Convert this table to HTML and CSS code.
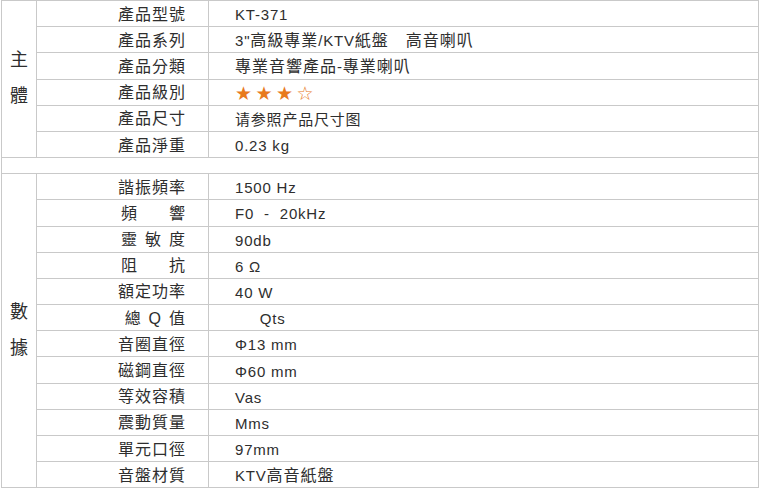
FILE: index.html
```html
<!DOCTYPE html>
<html lang="zh-Hant">
<head>
<meta charset="utf-8">
<title>KT-371</title>
<link rel="stylesheet" href="styles.css">
</head>
<body>
<table class="spec">
  <colgroup>
    <col class="c-group">
    <col class="c-label">
    <col class="c-value">
  </colgroup>
  <tbody>
    <tr>
      <td class="group" rowspan="6">主<br>體</td>
      <td class="label">產品型號</td>
      <td class="value">KT-371</td>
    </tr>
    <tr>
      <td class="label">產品系列</td>
      <td class="value">3"<span class="han">高級專業</span>/KTV<span class="han">紙盤　高音喇叭</span></td>
    </tr>
    <tr>
      <td class="label">產品分類</td>
      <td class="value"><span class="han">專業音響產品</span>-<span class="han">專業喇叭</span></td>
    </tr>
    <tr>
      <td class="label">產品級別</td>
      <td class="value"><span class="stars"><span class="star">★</span><span class="star">★</span><span class="star">★</span><span class="star">☆</span></span></td>
    </tr>
    <tr>
      <td class="label">產品尺寸</td>
      <td class="value" lang="zh-Hans">请参照产品尺寸图</td>
    </tr>
    <tr>
      <td class="label">產品淨重</td>
      <td class="value">0.23 kg</td>
    </tr>
    <tr class="gap">
      <td colspan="3"></td>
    </tr>
    <tr>
      <td class="group" rowspan="12">數<br>據</td>
      <td class="label">諧振頻率</td>
      <td class="value">1500 Hz</td>
    </tr>
    <tr>
      <td class="label">頻　&nbsp;&nbsp;響</td>
      <td class="value">F0&nbsp; -&nbsp; 20kHz</td>
    </tr>
    <tr>
      <td class="label">靈 敏 度</td>
      <td class="value">90db</td>
    </tr>
    <tr>
      <td class="label">阻　&nbsp;&nbsp;抗</td>
      <td class="value">6 Ω</td>
    </tr>
    <tr>
      <td class="label">額定功率</td>
      <td class="value">40 W</td>
    </tr>
    <tr>
      <td class="label">總 Q 值</td>
      <td class="value">&nbsp;&nbsp;&nbsp;&nbsp;&nbsp;Qts</td>
    </tr>
    <tr>
      <td class="label">音圈直徑</td>
      <td class="value">Φ13 mm</td>
    </tr>
    <tr>
      <td class="label">磁鋼直徑</td>
      <td class="value">Φ60 mm</td>
    </tr>
    <tr>
      <td class="label">等效容積</td>
      <td class="value">Vas</td>
    </tr>
    <tr>
      <td class="label">震動質量</td>
      <td class="value">Mms</td>
    </tr>
    <tr>
      <td class="label">單元口徑</td>
      <td class="value">97mm</td>
    </tr>
    <tr>
      <td class="label">音盤材質</td>
      <td class="value">KTV<span class="han">高音紙盤</span></td>
    </tr>
  </tbody>
</table>
</body>
</html>
```
FILE: styles.css
```css
html, body {
  margin: 0;
  padding: 0;
  background: #ffffff;
}

body {
  font-family: "Liberation Sans", "Noto Sans CJK TC", sans-serif;
  color: #2e2e2e;
}

.spec {
  margin-left: 1px;
  width: 757px;
  border-collapse: collapse;
  table-layout: fixed;
}

.c-group { width: 35px; }
.c-label { width: 172px; }
.c-value { width: 550px; }

.spec td {
  border: 1px solid #c9c9c9;
  padding: 0;
  height: 26.2px;
  line-height: 18px;
  box-sizing: border-box;
  white-space: nowrap;
  vertical-align: middle;
}

.spec .group {
  text-align: center;
  font-size: 18px;
  line-height: 36px;
  padding-bottom: 2px;
}

.spec .label {
  text-align: right;
  font-size: 16px;
  letter-spacing: 1px;
  word-spacing: 1.5px;
  padding-right: 22px;
  padding-top: 2px;
}

.spec .value {
  text-align: left;
  font-size: 15px;
  letter-spacing: 0.8px;
  padding-left: 26px;
  padding-top: 3px;
}

.value .han {
  font-size: 16px;
  letter-spacing: 1px;
}

.spec .gap td {
  height: 16px;
}

.stars {
  display: inline-flex;
  font-family: "DejaVu Sans", sans-serif;
  font-size: 19px;
  line-height: 18px;
  letter-spacing: 0;
  color: #e8791d;
}

.star {
  display: inline-block;
  width: 20.5px;
}
```
